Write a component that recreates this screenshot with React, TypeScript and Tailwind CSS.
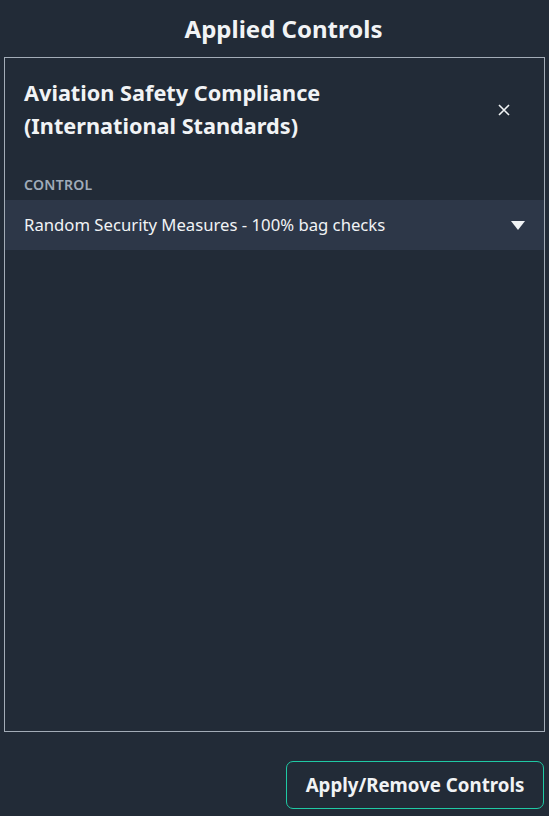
import React from "react";

export default function App() {
  return (
    <div
      className="w-[549px] h-[816px] bg-[#222b37] flex flex-col text-[#f1f3f5]"
      style={{ fontFamily: '"Noto Sans", "Open Sans", sans-serif' }}
    >
      <div className="h-[57px] flex items-center justify-center pl-[18px] text-[24px] font-bold">
        Applied Controls
      </div>
      <div className="ml-[4px] w-[541px] h-[675px] border border-[#a3acb7] flex flex-col">
        <div className="flex items-center justify-between pl-[19px] pr-[34px] pt-[18px] pb-[10px]">
          <div className="text-[21.7px] font-bold leading-[33px]">
            Aviation Safety Compliance
            <br />
            (International Standards)
          </div>
          <svg width="12" height="12" viewBox="0 0 12 12" className="mt-[2px]">
            <path d="M1 1L11 11M11 1L1 11" stroke="#f1f3f5" strokeWidth="1.6" />
          </svg>
        </div>
        <div className="pl-[19px] pt-[22px] pb-[5px] text-[14px] font-semibold text-[#a0abb9] tracking-[0.3px]">
          CONTROL
        </div>
        <div className="h-[50px] bg-[#2d3748] flex items-center justify-between pl-[19px] pr-[19px]">
          <span className="text-[16.7px]">Random Security Measures - 100% bag checks</span>
          <svg width="14" height="9" viewBox="0 0 14 9">
            <path d="M0 0H14L7 9Z" fill="#f1f3f5" />
          </svg>
        </div>
      </div>
      <div className="flex justify-end pr-[5px] pt-[29px]">
        <button className="w-[258px] h-[48px] border border-[#1fc9a4] rounded-[7px] text-[18.7px] font-bold text-[#f1f3f5]">
          Apply/Remove Controls
        </button>
      </div>
    </div>
  );
}
